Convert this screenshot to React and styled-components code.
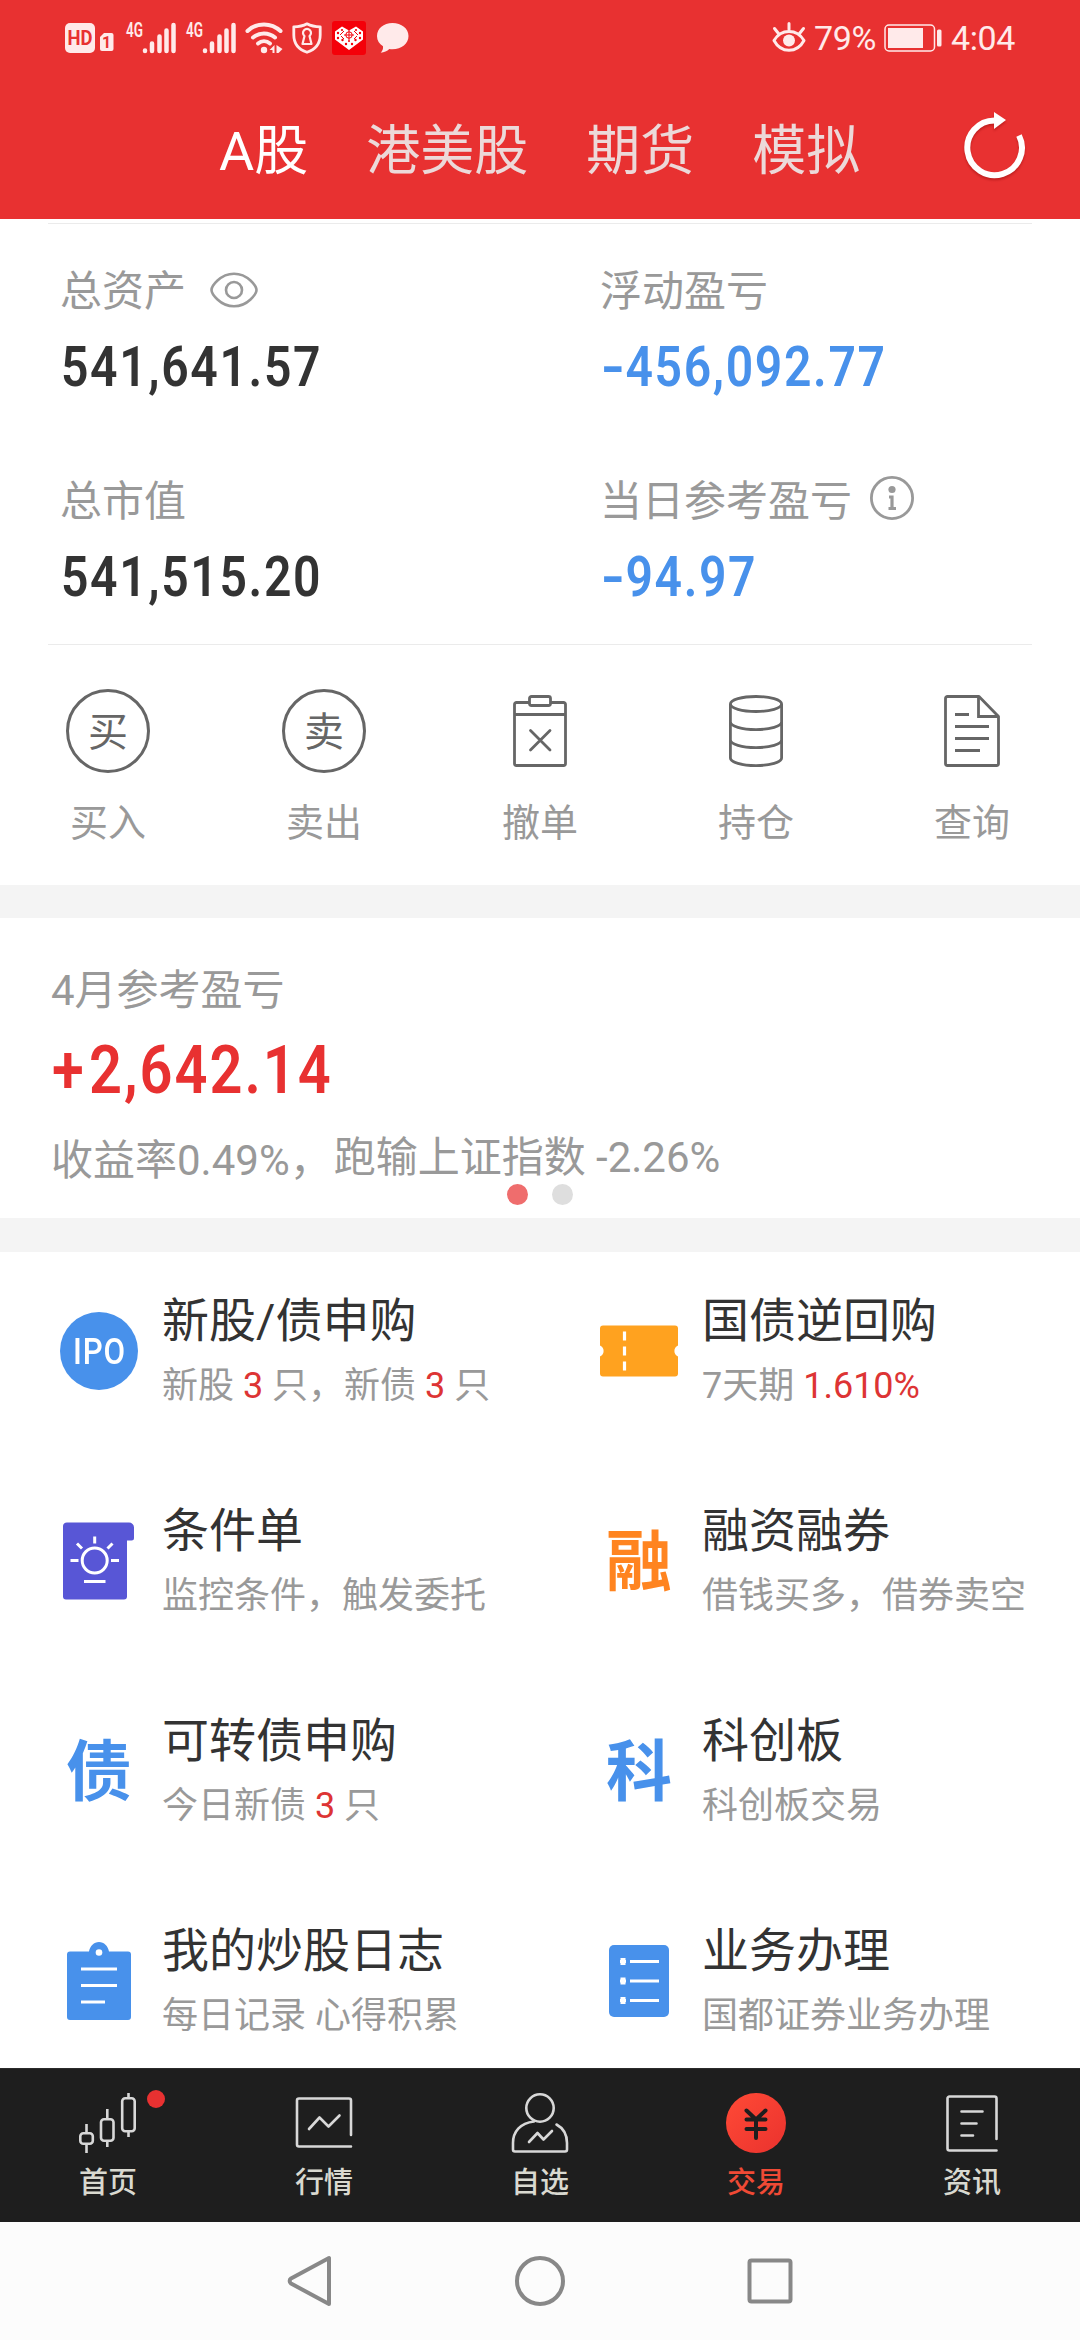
import React from "react";
import { useState } from "react";
import styled, { createGlobalStyle } from "styled-components";

const GlobalStyle = createGlobalStyle`
  * {
    box-sizing: border-box;
  }
  body {
    margin: 0;
    background: #fff;
    font-family: Roboto, "Noto Sans CJK SC", sans-serif;
  }
  svg {
    display: block;
    flex: none;
    overflow: visible;
  }
`;

const Screen = styled.div`
  display: flex;
  flex-direction: column;
  width: 1080px;
  height: 2340px;
  overflow: hidden;
  background: #fff;
`;

const Header = styled.header`
  height: 219px;
  flex: none;
  background: #e83131;
`;

const StatusBar = styled.div`
  display: flex;
  align-items: center;
  justify-content: space-between;
  height: 76px;
  padding: 0 65px;
  color: #ffeaea;
`;

const StatusGroup = styled.div`
  display: flex;
  align-items: center;
  gap: ${(props) => props.gap || 0}px;
`;

const StatusText = styled.span`
  font-size: 34px;
  line-height: 40px;
  letter-spacing: -0.4px;
`;

const TabBar = styled.div`
  display: flex;
  align-items: center;
  height: 143px;
  padding: 0 55px 0 219px;
`;

const Tab = styled.span`
  margin-right: 58px;
  padding-top: 8px;
  font-size: 54px;
  line-height: 64px;
  white-space: nowrap;
  cursor: pointer;
  color: ${(props) => (props.$active ? "#fff" : "#ecd9d9")};
`;

const RefreshButton = styled.div`
  margin: 0 0 3px auto;
  filter: drop-shadow(0 2px 1px rgba(120, 0, 0, 0.35));
`;

const Divider = styled.div`
  height: 1px;
  flex: none;
  margin: ${(props) => props.$top || 0}px 48px 0;
  background: #ebebeb;
`;

const Assets = styled.section`
  display: grid;
  grid-template-columns: 1fr 1fr;
  row-gap: 81px;
  flex: none;
  padding: 44px 0 37px;
`;

const Asset = styled.div`
  padding-left: 60px;
`;

const AssetLabel = styled.div`
  display: flex;
  align-items: center;
  gap: ${(props) => props.gap || 0}px;
  height: 48px;
  font-size: 42px;
  line-height: 48px;
  color: #999;
  > svg {
    margin-bottom: ${(props) => props.$lift || 0}px;
  }
`;

/* narrow figures, squeezed a little to look like a DIN face */
const Amount = styled.div`
  margin-top: 21px;
  padding-left: 1px;
  font-size: ${(props) => props.size || 55}px;
  font-weight: 600;
  line-height: ${(props) => (props.size ? 70 : 60)}px;
  letter-spacing: 0.034em;
  white-space: nowrap;
  transform: scaleX(0.875);
  transform-origin: left center;
  color: ${(props) => props.color || "#333"};
`;

const Minus = styled.span`
  display: inline-block;
  width: 28px;
  letter-spacing: 0;
  transform: scaleX(1.35);
  transform-origin: left center;
`;

const Plus = styled.span`
  margin: 0 4px 0 0;
`;

const Actions = styled.section`
  display: grid;
  grid-template-columns: repeat(5, 1fr);
  height: 240px;
  flex: none;
  padding-top: 44px;
`;

const Action = styled.div`
  display: flex;
  flex-direction: column;
  align-items: center;
  gap: 26px;
  font-size: 38px;
  line-height: 48px;
  color: #999;
`;

const ActionIcon = styled.div`
  display: flex;
  align-items: center;
  justify-content: center;
  width: 84px;
  height: 84px;
  padding-top: ${(props) => (props.$ring ? 3 : 0)}px;
  font-size: 40px;
  line-height: 48px;
  color: #666;
  border-radius: 50%;
  border: ${(props) => (props.$ring ? "3px solid #666" : "none")};
`;

const Band = styled.div`
  height: ${(props) => props.height}px;
  flex: none;
  background: #f4f4f4;
`;

const ProfitCard = styled.section`
  position: relative;
  height: 300px;
  flex: none;
  padding: 49px 51px 0;
`;

const ProfitLine = styled.div`
  font-size: 42px;
  line-height: 48px;
  margin-top: ${(props) => props.$top || 0}px;
  color: #999;
`;

const Compare = styled.span`
  display: inline-block;
  padding-bottom: 3px;
  margin: -3px 0 0 2px;
  vertical-align: 3px;
  line-height: 42px;
`;

const Dots = styled.div`
  position: absolute;
  left: 0;
  right: 0;
  bottom: 13px;
  display: flex;
  justify-content: center;
  gap: 24px;
`;

const Dot = styled.i`
  width: 21px;
  height: 21px;
  border-radius: 50%;
  background: ${(props) => (props.$active ? "#ef6d6d" : "#dedede")};
`;

const Services = styled.section`
  display: grid;
  grid-template-columns: 1fr 1fr;
  grid-auto-rows: 210px;
  height: 816px;
  flex: none;
  overflow: hidden;
`;

const Service = styled.div`
  display: flex;
  gap: 24px;
  padding: 41px 0 0 60px;
`;

const ServiceIcon = styled.div`
  display: flex;
  align-items: center;
  justify-content: center;
  width: 78px;
  height: 78px;
  flex: none;
  margin-top: 19px;
`;

const IpoBadge = styled.div`
  width: 78px;
  height: 78px;
  border-radius: 50%;
  background: #4891eb;
  color: #fff;
  font-size: 36px;
  font-weight: 500;
  line-height: 80px;
  text-align: center;
  > span {
    display: inline-block;
    margin: 0 -10px;
    letter-spacing: 1px;
    transform: scaleX(0.87);
  }
`;

const GlyphIcon = styled.span`
  font-family: "Noto Sans CJK SC", sans-serif;
  font-size: 66px;
  font-weight: 700;
  line-height: 78px;
  padding-bottom: 11px;
  color: ${(props) => props.color};
`;

const ServiceTitle = styled.div`
  font-size: 47px;
  line-height: 56px;
  white-space: nowrap;
  color: #333;
`;

const ServiceNote = styled.div`
  margin-top: 15px;
  font-size: 36px;
  line-height: 44px;
  white-space: nowrap;
  color: #999;
`;

const Hot = styled.span`
  color: #dd3434;
`;

const NavBar = styled.nav`
  display: grid;
  grid-template-columns: repeat(5, 1fr);
  height: 154px;
  flex: none;
  padding-top: 24px;
  border-top: 1px solid #2b2b2b;
  background: #1e1e1e;
`;

const NavItem = styled.div`
  position: relative;
  display: flex;
  flex-direction: column;
  align-items: center;
  gap: 12px;
  font-size: 29px;
  font-weight: 500;
  line-height: 36px;
  cursor: pointer;
  color: ${(props) => (props.$active ? "#f04a35" : "#d9d9d0")};
`;

const UnreadDot = styled.i`
  position: absolute;
  top: -3px;
  left: 147px;
  width: 18px;
  height: 18px;
  border-radius: 50%;
  background: #e83131;
`;

const SystemBar = styled.div`
  display: flex;
  align-items: center;
  justify-content: center;
  gap: 182px;
  height: 118px;
  flex: none;
  background: #fcfcfc;
`;

const HdIcon = () => (
  <svg width="50" height="32" viewBox="0 0 50 32">
    <rect x="0" y="1" width="30" height="30" rx="5" fill="#ffeaea" />
    <text
      x="15"
      y="23"
      textAnchor="middle"
      textLength="25"
      lengthAdjust="spacingAndGlyphs"
      fontFamily="Roboto"
      fontSize="20"
      fontWeight="700"
      fill="#e83131"
    >
      HD
    </text>
    <path d="M39 11h7.500a2 2 0 0 1 2 2v14a2 2 0 0 1-2 2h-9.500a2 2 0 0 1-2-2v-12z" fill="#ffeaea" />
    <text
      x="41.500"
      y="26"
      textAnchor="middle"
      fontFamily="Roboto"
      fontSize="16"
      fontWeight="700"
      fill="#e83131"
    >
      1
    </text>
  </svg>
);

const SignalIcon = () => (
  <svg width="50" height="32" viewBox="0 0 50 32">
    <text
      x="1"
      y="15"
      textLength="17"
      lengthAdjust="spacingAndGlyphs"
      fontFamily="Roboto"
      fontSize="20"
      fontWeight="600"
      fill="#ffeaea"
    >
      4G
    </text>
    <path
      d="M20 28.500v.5M27 21.500v7.500M34.500 14.500v14.500M41.500 8.500v20.500M48.500 3v26"
      stroke="#ffeaea"
      strokeWidth="4.500"
      strokeLinecap="round"
    />
  </svg>
);

const WifiIcon = () => (
  <svg width="37" height="32" viewBox="0 0 37 32" fill="none">
    <g stroke="#ffeaea" strokeWidth="4" strokeLinecap="round">
      <path d="M2.500 9a24 24 0 0 1 33 0" />
      <path d="M8 15.500a17 17 0 0 1 22 0" />
      <path d="M13 21.500a9.500 9.500 0 0 1 12 0" />
    </g>
    <circle cx="19" cy="28" r="3.200" fill="#ffeaea" />
    <path d="M24.500 28l5-5v8h-2v-3zM31.500 23l6 4-4 4h-2z" fill="#ffeaea" />
  </svg>
);

const ShieldIcon = () => (
  <svg width="30" height="32" viewBox="0 0 30 32" fill="none" stroke="#ffeaea">
    <path
      d="M15 1.800C11 4 6.500 4.800 1.800 4.800V13c0 8.500 5 14.500 13.200 17.300C23.200 27.500 28.200 21.500 28.200 13V4.800C23.500 4.800 19 4 15 1.800z"
      strokeWidth="2.800"
      strokeLinejoin="round"
    />
    <path
      d="M12.500 14a4 4 0 1 1 5 0l2 8h-9z"
      strokeWidth="2.200"
      strokeLinejoin="round"
    />
  </svg>
);

const HeartIcon = () => (
  <svg width="34" height="34" viewBox="0 0 34 34">
    <rect width="34" height="34" rx="3" fill="#f40009" />
    <path d="M10 5.500l7 4 7-4 7 5v8l-14 10.500L3 18.500v-8z" fill="#fff" />
    <g fill="#f40009">
      <circle cx="10" cy="9" r="1.100" />
      <circle cx="24" cy="9" r="1.100" />
      <circle cx="6" cy="12" r="1.200" />
      <circle cx="28" cy="12" r="1.200" />
      <circle cx="6" cy="17" r="1.200" />
      <circle cx="28" cy="17" r="1.200" />
      <circle cx="10.500" cy="19" r="1.200" />
      <circle cx="23.500" cy="19" r="1.200" />
      <circle cx="14" cy="23" r="1.200" />
      <circle cx="20" cy="23" r="1.200" />
      <circle cx="17" cy="20" r="1" />
    </g>
    <g stroke="#f40009" fill="none">
      <circle cx="17" cy="14" r="3.200" />
      <path d="M17 9v10M12 14h10M8 14l4-4M26 14l-4-4M9 15l3 3M25 15l-3 3" />
    </g>
  </svg>
);

const BubbleIcon = () => (
  <svg width="33" height="32" viewBox="0 0 33 32">
    <path
      d="M16.500 1C7.500 1 1 6.500 1 14c0 4.500 2.300 8 6 10.300.3 2.700-.5 4.700-2.300 6.500 3.500-.2 6.500-1.600 8.600-3.700 11 1.300 19.200-4.600 19.200-13.100C32.500 6.500 25.500 1 16.500 1z"
      fill="#ffeaea"
    />
  </svg>
);

const WatchIcon = () => (
  <svg width="34" height="32" viewBox="0 0 34 32" fill="none" stroke="#ffeaea" strokeLinecap="round">
    <path d="M2 18.500C9 6.500 25 6.500 32 18.500C25 31.500 9 31.500 2 18.500z" strokeWidth="3" strokeLinejoin="round" />
    <path d="M17 1.500v6M2.500 6.500l4 5M31.500 6.500l-4 5" strokeWidth="3" />
    <circle cx="17" cy="18.500" r="6" fill="#ffeaea" stroke="none" />
  </svg>
);

const BatteryIcon = () => (
  <svg width="59" height="28" viewBox="0 0 59 28">
    <rect x="1" y="1" width="49.500" height="26" rx="4" fill="none" stroke="#ffeaea" strokeWidth="1.500" />
    <rect x="4" y="4" width="35" height="20" fill="#ffeaea" />
    <rect x="53" y="5.500" width="4.500" height="17" rx="1.500" fill="#ffeaea" />
  </svg>
);

const RefreshIcon = () => (
  <svg width="62" height="68" viewBox="0 0 62 68">
    <path
      d="M32 8.500A27.300 27.300 0 1 0 56 23.500"
      fill="none"
      stroke="#fff"
      strokeWidth="6"
    />
    <path d="M31 0l12 8-12 9z" fill="#fff" />
  </svg>
);

const EyeIcon = () => (
  <svg width="48" height="36" viewBox="0 0 48 36" fill="none" stroke="#999" strokeWidth="2.600">
    <path d="M1.500 18C1.500 14.500 10 1.700 24 1.700S46.500 14.500 46.500 18 38 34.300 24 34.300 1.500 21.500 1.500 18z" />
    <circle cx="24" cy="18" r="8" />
  </svg>
);

const InfoIcon = () => (
  <svg width="44" height="44" viewBox="0 0 44 44">
    <circle cx="22" cy="22" r="20.600" fill="none" stroke="#999" strokeWidth="2.800" />
    <circle cx="22" cy="13.500" r="3.600" fill="#999" />
    <path d="M19 21h3v11.500M18.500 32.500h7.500" fill="none" stroke="#999" strokeWidth="3.200" />
  </svg>
);

const CancelIcon = () => (
  <svg width="54" height="72" viewBox="0 0 54 72" fill="none" stroke="#666" strokeWidth="2.800">
    <path d="M16 7.500H3.500a2 2 0 0 0-2 2v59a2 2 0 0 0 2 2h47a2 2 0 0 0 2-2v-59a2 2 0 0 0-2-2H38" />
    <rect x="16.500" y="1.500" width="21" height="9" rx="2" />
    <path d="M1.500 19.500h51" />
    <path d="M17.500 35.500l19.500 19.500M37 35.500l-19.500 19.500" strokeLinecap="round" />
  </svg>
);

const HoldingsIcon = () => (
  <svg width="54" height="72" viewBox="0 0 54 72" fill="none" stroke="#666" strokeWidth="2.800">
    <ellipse cx="27" cy="9" rx="25.600" ry="7.500" />
    <path d="M1.400 9v54c0 4.200 11.400 7.600 25.600 7.600s25.600-3.400 25.600-7.600V9" />
    <path d="M1.400 27c0 4.200 11.400 7.600 25.600 7.600s25.600-3.400 25.600-7.600M1.400 45c0 4.200 11.400 7.600 25.600 7.600s25.600-3.400 25.600-7.600" />
  </svg>
);

const QueryIcon = () => (
  <svg width="56" height="72" viewBox="0 0 56 72" fill="none" stroke="#666" strokeWidth="2.800">
    <path d="M35 1.500H3.500a2 2 0 0 0-2 2v65a2 2 0 0 0 2 2h49a2 2 0 0 0 2-2V21.500z" strokeLinejoin="round" />
    <path d="M34.500 1.500v20h20" />
    <path d="M11 19.500h14M11 31.500h34M11 43.500h34M11 55.500h25" />
  </svg>
);

const ConditionIcon = () => (
  <svg width="78" height="78" viewBox="0 0 78 78">
    <path d="M7 .5h62a5 5 0 0 1 5 5V16a2.500 2.500 0 0 1-2.500 2.500H67v56a3 3 0 0 1-3 3H6a3 3 0 0 1-3-3V4.500a4 4 0 0 1 4-4z" fill="#5856d6" />
    <g fill="none" stroke="#fff" strokeWidth="3">
      <circle cx="34.700" cy="38.500" r="12.500" />
      <path d="M34.700 14.500v7M17 21.500l5 5M52.500 21.500l-5 5M10.500 38.500h8M51 38.500h8M24 59.500h21.500" />
    </g>
  </svg>
);

const TicketIcon = () => (
  <svg width="78" height="52" viewBox="0 0 78 52">
    <path
      d="M3 .5h72a3 3 0 0 1 3 3v17a6 6 0 0 0 0 11v17a3 3 0 0 1-3 3H3a3 3 0 0 1-3-3v-17a6 6 0 0 0 0-11v-17a3 3 0 0 1 3-3z"
      fill="#ffa21f"
    />
    <path d="M24.500 6.500v9M24.500 21.500v9M24.500 36.500v9" stroke="#fff" strokeWidth="3.200" />
  </svg>
);

const JournalIcon = () => (
  <svg width="64" height="78" viewBox="0 0 64 78">
    <path
      d="M3 9.500h19C23 4 27 0 32 0s9 4 10 9.500h19a3 3 0 0 1 3 3V75a3 3 0 0 1-3 3H3a3 3 0 0 1-3-3V12.500a3 3 0 0 1 3-3z"
      fill="#4891eb"
    />
    <circle cx="32" cy="10.500" r="3.300" fill="#fff" />
    <path d="M14 27h36M14 43.500h36M14 60h24" stroke="#fff" strokeWidth="3.200" />
  </svg>
);

const BusinessIcon = () => (
  <svg width="60" height="72" viewBox="0 0 60 72">
    <rect width="60" height="72" rx="5" fill="#4891eb" />
    <path
      d="M11 16.500h6M21 16.500h29M11 36h6M21 36h29M11 55.500h6M21 55.500h29"
      stroke="#fff"
      strokeWidth="3"
    />
    <path d="M14 13v7M14 32.500v7M14 52v7" stroke="#fff" strokeWidth="5" />
  </svg>
);

const HomeIcon = () => (
  <svg width="60" height="60" viewBox="0 0 60 60" fill="none" stroke="#d8d8d8" strokeWidth="2.600">
    <rect x="2.300" y="40.300" width="12.500" height="10.500" rx="3" />
    <rect x="23" y="26.300" width="12.500" height="21.500" rx="3" />
    <rect x="44.200" y="5.300" width="12.500" height="33" rx="3" />
    <path d="M8.500 31v9M8.500 51v9M29.300 16v10M29.300 48v6M50.500 0v5M50.500 38.500v5.500" />
  </svg>
);

const QuotesIcon = () => (
  <svg width="60" height="60" viewBox="0 0 60 60" fill="none" stroke="#d8d8d8" strokeWidth="2.600" strokeLinecap="round" strokeLinejoin="round">
    <path d="M57 42V7.500a2 2 0 0 0-2-2H5a2 2 0 0 0-2 2v44a2 2 0 0 0 2 2h52" />
    <path d="M15 36l10.500-11.500 9 9 11-11" />
  </svg>
);

const WatchlistIcon = () => (
  <svg width="60" height="60" viewBox="0 0 60 60" fill="none" stroke="#d8d8d8" strokeWidth="2.600" strokeLinecap="round" strokeLinejoin="round">
    <circle cx="30" cy="15" r="13.700" />
    <path d="M24 28.500C10 30 3 39 3 50v6.500a2 2 0 0 0 2 2h50a2 2 0 0 0 2-2V50c0-8-4-15-10.500-18.500" />
    <path d="M19 49l8.500-9 6 6.500 8.500-8.500" />
  </svg>
);

const TradeIcon = () => (
  <svg width="60" height="60" viewBox="0 0 60 60">
    <defs>
      <linearGradient id="trade" x1="0" y1="0" x2="1" y2="1">
        <stop offset="0" stopColor="#ff4a36" />
        <stop offset="1" stopColor="#ea322e" />
      </linearGradient>
    </defs>
    <circle cx="30" cy="30" r="30" fill="url(#trade)" />
    <path
      d="M20.500 17.500l9.500 9 9.500-9M20.500 26.500h19M20.500 36h19M30 26.500v18.500"
      fill="none"
      stroke="#1e1e1e"
      strokeWidth="4"
      strokeLinecap="round"
      strokeLinejoin="round"
    />
  </svg>
);

const NewsIcon = () => (
  <svg width="60" height="60" viewBox="0 0 60 60" fill="none" stroke="#d8d8d8" strokeWidth="2.600" strokeLinecap="round" strokeLinejoin="round">
    <path d="M54.500 46V5.500a2 2 0 0 0-2-2H7.500a2 2 0 0 0-2 2v50a2 2 0 0 0 2 2h47" />
    <path d="M19.500 18.500h21M19.500 30.500h15M19.500 42.500h11.500" />
  </svg>
);

const tabs = ["A股", "港美股", "期货", "模拟"];

const actions = [
  { label: "买入", glyph: "买" },
  { label: "卖出", glyph: "卖" },
  { label: "撤单", icon: <CancelIcon /> },
  { label: "持仓", icon: <HoldingsIcon /> },
  { label: "查询", icon: <QueryIcon /> },
];

const services = [
  {
    title: "新股/债申购",
    icon: (
      <IpoBadge>
        <span>IPO</span>
      </IpoBadge>
    ),
    note: (
      <>
        新股 <Hot>3</Hot> 只，新债 <Hot>3</Hot> 只
      </>
    ),
  },
  {
    title: "国债逆回购",
    icon: <TicketIcon />,
    note: (
      <>
        7天期 <Hot>1.610%</Hot>
      </>
    ),
  },
  { title: "条件单", icon: <ConditionIcon />, note: "监控条件，触发委托" },
  {
    title: "融资融券",
    icon: <GlyphIcon color="#ff8420">融</GlyphIcon>,
    note: "借钱买多，借券卖空",
  },
  {
    title: "可转债申购",
    icon: <GlyphIcon color="#4891eb">债</GlyphIcon>,
    note: (
      <>
        今日新债 <Hot>3</Hot> 只
      </>
    ),
  },
  {
    title: "科创板",
    icon: <GlyphIcon color="#4891eb">科</GlyphIcon>,
    note: "科创板交易",
  },
  { title: "我的炒股日志", icon: <JournalIcon />, note: "每日记录 心得积累" },
  { title: "业务办理", icon: <BusinessIcon />, note: "国都证券业务办理" },
];

const navItems = [
  { label: "首页", icon: <HomeIcon />, unread: true },
  { label: "行情", icon: <QuotesIcon /> },
  { label: "自选", icon: <WatchlistIcon /> },
  { label: "交易", icon: <TradeIcon /> },
  { label: "资讯", icon: <NewsIcon /> },
];

export default function App() {
  const [tab, setTab] = useState(0);
  const [page, setPage] = useState(3);

  return (
    <>
      <GlobalStyle />
      <Screen lang="zh-CN">
        <Header>
          <StatusBar>
            <StatusGroup gap={10}>
              <HdIcon />
              <SignalIcon />
              <SignalIcon />
              <WifiIcon />
              <ShieldIcon />
              <HeartIcon />
              <BubbleIcon />
            </StatusGroup>
            <StatusGroup gap={8}>
              <WatchIcon />
              <StatusText>79%</StatusText>
              <BatteryIcon />
              <StatusText>4:04</StatusText>
            </StatusGroup>
          </StatusBar>
          <TabBar>
            {tabs.map((name, index) => (
              <Tab key={name} $active={index === tab} onClick={() => setTab(index)}>
                {name}
              </Tab>
            ))}
            <RefreshButton>
              <RefreshIcon />
            </RefreshButton>
          </TabBar>
        </Header>

        <Divider $top={4} />
        <Assets>
          <Asset>
            <AssetLabel gap={24} $lift={5}>
              总资产 <EyeIcon />
            </AssetLabel>
            <Amount>541,641.57</Amount>
          </Asset>
          <Asset>
            <AssetLabel>浮动盈亏</AssetLabel>
            <Amount color="#4891eb">
              <Minus>-</Minus>456,092.77
            </Amount>
          </Asset>
          <Asset>
            <AssetLabel>总市值</AssetLabel>
            <Amount>541,515.20</Amount>
          </Asset>
          <Asset>
            <AssetLabel gap={18} $lift={8}>
              当日参考盈亏 <InfoIcon />
            </AssetLabel>
            <Amount color="#4891eb">
              <Minus>-</Minus>94.97
            </Amount>
          </Asset>
        </Assets>
        <Divider />

        <Actions>
          {actions.map((item) => (
            <Action key={item.label}>
              <ActionIcon $ring={!!item.glyph}>{item.glyph || item.icon}</ActionIcon>
              {item.label}
            </Action>
          ))}
        </Actions>

        <Band height={33} />
        <ProfitCard>
          <ProfitLine>4月参考盈亏</ProfitLine>
          <Amount size={66} color="#e83131">
            <Plus>+</Plus>2,642.14
          </Amount>
          <ProfitLine $top={31}>
            收益率0.49%，<Compare>跑输上证指数 -2.26%</Compare>
          </ProfitLine>
          <Dots>
            <Dot $active />
            <Dot />
          </Dots>
        </ProfitCard>
        <Band height={34} />

        <Services>
          {services.map((item) => (
            <Service key={item.title}>
              <ServiceIcon>{item.icon}</ServiceIcon>
              <div>
                <ServiceTitle>{item.title}</ServiceTitle>
                <ServiceNote>{item.note}</ServiceNote>
              </div>
            </Service>
          ))}
        </Services>

        <NavBar>
          {navItems.map((item, index) => (
            <NavItem key={item.label} $active={index === page} onClick={() => setPage(index)}>
              {item.icon}
              {item.label}
              {item.unread && <UnreadDot />}
            </NavItem>
          ))}
        </NavBar>

        <SystemBar>
          <svg width="46" height="52" viewBox="0 0 46 52" fill="none" stroke="#888" strokeWidth="4">
            <path d="M42 3v46L4 28.500a3 3 0 0 1 0-5z" strokeLinejoin="round" />
          </svg>
          <svg width="50" height="50" viewBox="0 0 50 50" fill="none" stroke="#888" strokeWidth="4">
            <circle cx="25" cy="25" r="23" />
          </svg>
          <svg width="46" height="46" viewBox="0 0 46 46" fill="none" stroke="#888" strokeWidth="4">
            <rect x="2.500" y="2.500" width="41" height="41" rx="2" />
          </svg>
        </SystemBar>
      </Screen>
    </>
  );
}
